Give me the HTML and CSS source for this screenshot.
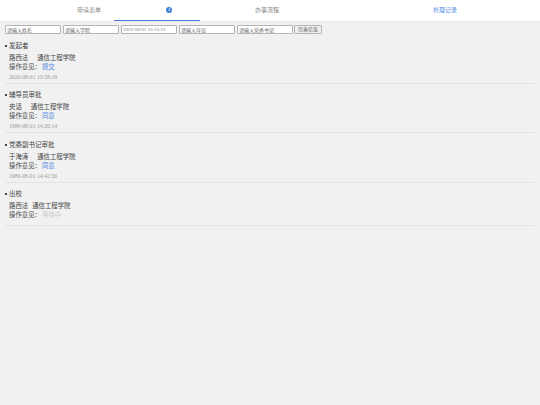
FILE: index.html
```html
<!DOCTYPE html>
<html lang="zh">
<head>
<meta charset="utf-8">
<title>处理记录</title>
<link rel="stylesheet" href="styles.css">
</head>
<body>
<header class="tabs">
  <div class="tab">申请表单</div>
  <div class="tab">办事流程</div>
  <div class="tab active">处理记录</div>
  <span class="badge">4</span>
  <span class="ink"></span>
</header>
<form class="filters">
  <input class="field" placeholder="请输入姓名">
  <input class="field" placeholder="请输入学院">
  <input class="field date" value="2020-08-01 10:10:10">
  <input class="field" placeholder="请输入导员">
  <input class="field" placeholder="请输入党委书记">
  <button class="submit" type="button">完善信息</button>
</form>
<main class="records">
  <section class="record">
    <h2 class="step">发起者</h2>
    <p class="who"><span class="name">路西法</span>通信工程学院</p>
    <p class="opinion">操作意见：<span class="ok">提交</span></p>
    <p class="time">2020-08-01 13:58:19</p>
  </section>
  <section class="record">
    <h2 class="step">辅导员审批</h2>
    <p class="who"><span class="name">央话</span>通信工程学院</p>
    <p class="opinion">操作意见：<span class="ok">同意</span></p>
    <p class="time">1989-08-01 14:20:14</p>
  </section>
  <section class="record">
    <h2 class="step">党委副书记审批</h2>
    <p class="who"><span class="name">于海涛</span>通信工程学院</p>
    <p class="opinion">操作意见：<span class="ok">同意</span></p>
    <p class="time">1989-08-01 14:42:56</p>
  </section>
  <section class="record">
    <h2 class="step">出校</h2>
    <p class="who"><span class="name tight">路西法</span>通信工程学院</p>
    <p class="opinion">操作意见：<span class="wait">等待中</span></p>
  </section>
</main>
</body>
</html>
```
FILE: styles.css
```css
* { box-sizing: border-box; }
html, body { margin: 0; height: 100%; }
body {
  background: #f1f1f1;
  color: #444;
  font-family: "Liberation Sans", "Noto Sans CJK SC", sans-serif;
  font-size: 6.4px;
}
.tabs {
  position: relative;
  display: grid;
  grid-template-columns: repeat(3, 178px);
  height: 21px;
  background: #fff;
  box-shadow: 0 1px 1px rgba(0, 0, 0, 0.03);
}
.tab {
  text-align: center;
  line-height: 21px;
  font-size: 6px;
  color: #888;
}
.tab.active { color: #5a90e4; }
.badge {
  position: absolute;
  left: 166px;
  top: 7px;
  width: 6px;
  height: 6px;
  border-radius: 50%;
  background: #3b7fdc;
  color: #fff;
  font-size: 4px;
  line-height: 6px;
  text-align: center;
}
.ink {
  position: absolute;
  left: 114px;
  bottom: 0;
  width: 86px;
  height: 1px;
  background: #4a80d8;
}
.filters {
  display: flex;
  gap: 2px;
  padding: 4px 5px 0;
  height: 20px;
  align-items: flex-start;
}
.field {
  width: 56px;
  height: 9px;
  margin: 0;
  padding: 0 1px;
  background: #fff;
  border: 1px solid #b4b4b4;
  border-radius: 1px;
  font: inherit;
  font-size: 5px;
  color: #666;
}
.field::placeholder { color: #666; opacity: 1; }
.field.date { font-family: "Liberation Serif", serif; color: #888; }
.submit {
  width: 28px;
  height: 9px;
  margin-left: -1px;
  padding: 0;
  background: #efefef;
  border: 1px solid #b4b4b4;
  border-radius: 1px;
  font: inherit;
  font-size: 5px;
  line-height: 7px;
  color: #555;
}
.records { padding: 0 5px; }
.record {
  height: 49.5px;
  padding-top: 6.5px;
  border-bottom: 1px solid #e4e4e4;
}
.record:first-child { height: 42.5px; padding-top: 0; }
.record:last-child { height: 43px; }
.step {
  position: relative;
  margin: 0;
  padding-left: 4px;
  font-size: 6.5px;
  font-weight: 400;
  line-height: 9px;
}
.step::before {
  content: "";
  position: absolute;
  left: 0;
  top: 4px;
  width: 2px;
  height: 2px;
  background: #444;
}
.who, .opinion, .time { margin: 0; padding-left: 4px; }
.who { margin-top: 3px; line-height: 9px; }
.name { margin-right: 9px; }
.name.tight { margin-right: 4px; }
.opinion { line-height: 9px; }
.ok { margin-left: 1px; color: #4a86e0; }
.wait { margin-left: 1px; color: #ccc; }
.time {
  margin-top: 2px;
  font-family: "Liberation Serif", serif;
  font-size: 5.7px;
  line-height: 8px;
  color: #999;
}
```
